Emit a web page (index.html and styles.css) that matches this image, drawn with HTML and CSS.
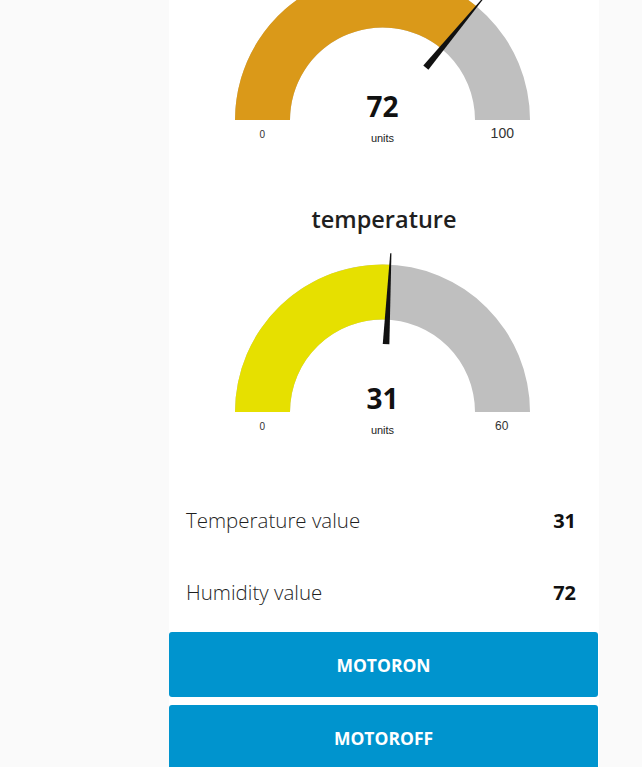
FILE: index.html
```html
<!DOCTYPE html>
<html>
<head>
<meta charset="utf-8">
<link rel="stylesheet" href="styles.css">
</head>
<body>
<main class="card">
  <section class="gauge">
    <div class="gauge-title"></div>
    <svg class="gauge-svg" width="430" height="244" viewBox="0 0 430 244">
      <path class="arc-bg" d="M66,169 A147.5,147.5 0 0 1 361,169 L306,169 A92.5,92.5 0 0 0 121,169 Z"/>
      <path class="arc-gold" d="M66,169 A147.5,147.5 0 0 1 307.52,55.35 L272.46,97.73 A92.5,92.5 0 0 0 121,169 Z"/>
      <polygon class="needle" points="259.38,118.71 315.25,46.80 314.45,46.18 254.30,114.51"/>
      <text class="g-value" x="213.5" y="166.3">72</text>
      <text class="g-units" x="213.5" y="191.3">units</text>
      <text class="g-min" x="93.3" y="186.7">0</text>
      <text class="g-max g-max-lg" x="333.3" y="187.3">100</text>
    </svg>
  </section>
  <section class="gauge">
    <div class="gauge-title">temperature</div>
    <svg class="gauge-svg" width="430" height="244" viewBox="0 0 430 244">
      <path class="arc-bg" d="M66,169 A147.5,147.5 0 0 1 361,169 L306,169 A92.5,92.5 0 0 0 121,169 Z"/>
      <path class="arc-yellow" d="M66,169 A147.5,147.5 0 0 1 221.22,21.70 L218.34,76.63 A92.5,92.5 0 0 0 121,169 Z"/>
      <polygon class="needle" points="220.36,101.26 222.42,10.25 221.22,10.19 213.76,100.92"/>
      <text class="g-value" x="213.5" y="166.3">31</text>
      <text class="g-units" x="213.5" y="191.3">units</text>
      <text class="g-min" x="93.3" y="186.7">0</text>
      <text class="g-max" x="332.7" y="187">60</text>
    </svg>
  </section>
  <div class="rows">
    <div class="row"><span class="row-label">Temperature value</span><span class="row-value">31</span></div>
    <div class="row"><span class="row-label">Humidity value</span><span class="row-value">72</span></div>
  </div>
  <div class="buttons">
    <button class="btn">MOTORON</button>
    <button class="btn">MOTOROFF</button>
  </div>
</main>
</body>
</html>
```
FILE: styles.css
```css
html, body {
  margin: 0;
  padding: 0;
  background: #fafafa;
  overflow: hidden;
}
body {
  font-family: "Open Sans", "Noto Sans", sans-serif;
  color: #1f1f1f;
}
.card {
  width: 430px;
  margin-left: 169px;
  margin-top: -97px;
  background: #ffffff;
  display: flex;
  flex-direction: column;
}
.gauge {
  height: 292px;
  display: flex;
  flex-direction: column;
}
.gauge-title {
  height: 48px;
  line-height: 48px;
  text-align: center;
  font-size: 23.5px;
  font-weight: 600;
  color: #1f1f1f;
}
.gauge-svg {
  display: block;
}
.arc-bg { fill: #bfbfbf; }
.arc-gold { fill: #da9919; }
.arc-yellow { fill: #e6e000; }
.needle { fill: #111111; }
.g-value {
  font-family: "Open Sans", "Noto Sans", sans-serif;
  font-weight: 700;
  font-size: 28px;
  fill: #111111;
  text-anchor: middle;
}
.g-units {
  font-family: "Liberation Sans", Arial, sans-serif;
  font-size: 11px;
  fill: #222222;
  text-anchor: middle;
}
.g-min, .g-max {
  font-family: "Liberation Sans", Arial, sans-serif;
  font-size: 10px;
  fill: #333333;
  text-anchor: middle;
}
.g-max { font-size: 12px; }
.g-max-lg { font-size: 14px; }
.rows {
  display: flex;
  flex-direction: column;
  gap: 6px;
}
.row {
  height: 66px;
  display: flex;
  align-items: center;
  justify-content: space-between;
  padding: 0 23px 0 17px;
}
.row-label {
  font-size: 20.5px;
  font-weight: 350;
  color: #1f1f1f;
}
.row-value {
  font-size: 20px;
  font-weight: 700;
  color: #111111;
}
.buttons {
  margin-top: 7px;
  display: flex;
  flex-direction: column;
  gap: 8px;
}
.btn {
  height: 65px;
  width: 429px;
  border: none;
  border-radius: 3px;
  background: #0094ce;
  color: #ffffff;
  font-family: "Open Sans", "Noto Sans", sans-serif;
  font-size: 17.5px;
  font-weight: 700;
  padding: 0;
}
```
